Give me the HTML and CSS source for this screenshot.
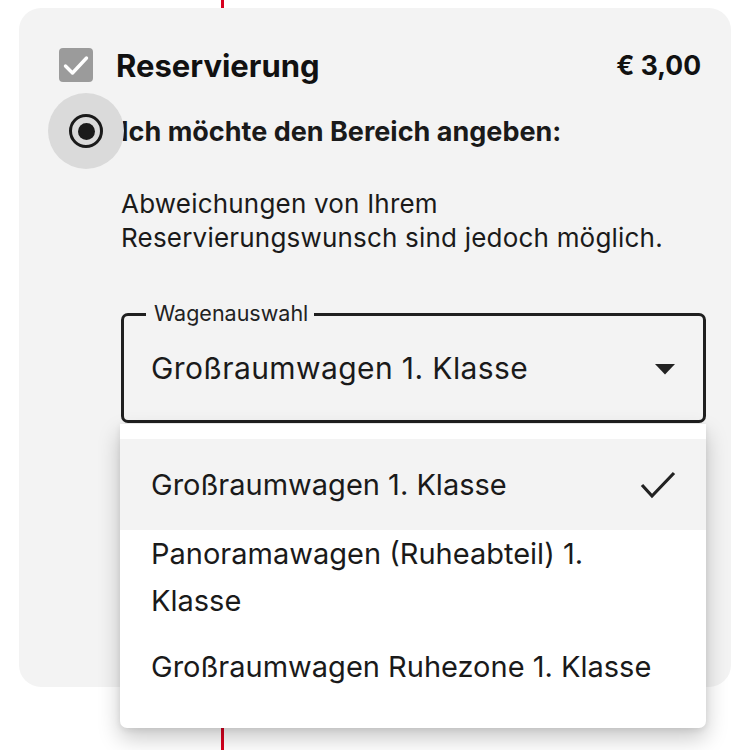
FILE: index.html
```html
<!DOCTYPE html>
<html lang="de">
<head>
<meta charset="utf-8">
<link rel="stylesheet" href="styles.css">
</head>
<body>
<div class="page">
  <div class="card">
    <div class="row-head">
      <span class="checkbox">
        <svg width="34" height="34" viewBox="0 0 34 34"><polyline points="6.5,18 13.5,25 27.5,10" fill="none" stroke="#fff" stroke-width="3.4" stroke-linecap="round" stroke-linejoin="round"/></svg>
      </span>
      <span class="title">Reservierung</span>
      <span class="price">€ 3,00</span>
    </div>
    <div class="row-radio">
      <span class="radio"><span class="halo"></span><span class="ring"><span class="dot"></span></span></span>
      <span class="radio-label">Ich möchte den Bereich angeben:</span>
    </div>
    <p class="desc">Abweichungen von Ihrem<br>Reservierungswunsch sind jedoch möglich.</p>
    <div class="select">
      <span class="select-label">Wagenauswahl</span>
      <span class="select-value">Großraumwagen 1. Klasse</span>
      <svg class="caret" width="20" height="11" viewBox="0 0 20 11"><polygon points="0,0 20,0 10,10.5" fill="#222"/></svg>
      <ul class="menu">
        <li class="item selected"><span>Großraumwagen 1. Klasse</span>
          <svg width="36" height="28" viewBox="0 0 36 28"><polyline points="2,14 12,25 34,2" fill="none" stroke="#222" stroke-width="3.2"/></svg>
        </li>
        <li class="item multi"><span>Panoramawagen (Ruheabteil) 1. Klasse</span></li>
        <li class="item clip"><span>Großraumwagen Ruhezone 1. Klasse</span></li>
      </ul>
    </div>
  </div>
</div>
</body>
</html>
```
FILE: styles.css
```css
* { box-sizing: border-box; }
html, body { margin: 0; padding: 0; background: #fff; }
body { font-family: Inter, "Liberation Sans", sans-serif; color: #111; }
.page { position: relative; width: 750px; height: 750px; padding-top: 8px; overflow: hidden; }
.page::before { content: ""; position: absolute; left: 221px; top: 0; width: 3px; height: 750px; background: #d7001e; }
.card { position: relative; margin: 0 19px; height: 679px; background: #f3f3f3; border-radius: 22px; padding: 40px 30px 0 40px; }
.row-head { display: flex; align-items: center; height: 34px; }
.checkbox { width: 34px; height: 34px; background: #9b9b9b; border-radius: 4px; display: flex; }
.title { font-size: 31px; font-weight: 700; margin-left: 23px; }
.price { margin-left: auto; font-size: 26.5px; font-weight: 700; }
.row-radio { display: flex; align-items: center; margin-top: 32px; height: 34px; margin-left: 10px; }
.radio { position: relative; width: 34px; height: 34px; flex: none; }
.halo { position: absolute; left: -21px; top: -21px; width: 76px; height: 76px; border-radius: 50%; background: #dadada; }
.ring { position: absolute; inset: 0; border: 3.5px solid #1a1a1a; border-radius: 50%; display: flex; align-items: center; justify-content: center; }
.dot { width: 17px; height: 17px; border-radius: 50%; background: #1a1a1a; }
.radio-label { font-size: 27px; font-weight: 700; margin-left: 18px; color: #1a1a1a; }
.desc { margin: 39px 0 0 62px; font-size: 26px; line-height: 34px; letter-spacing: 0.2px; color: #1a1a1a; }
.select { position: relative; margin: 58px 0 0 62px; width: 585px; height: 110px; border: 3px solid #1f1f1f; border-radius: 7px; display: flex; align-items: center; padding: 0 28px 0 27px; }
.select-label { position: absolute; left: 22px; top: -14px; background: #f3f3f3; padding: 0 6px 0 8px; font-size: 21.5px; line-height: 22px; color: #222; }
.select-value { font-size: 30px; letter-spacing: 0.4px; color: #1a1a1a; }
.caret { margin-left: auto; margin-top: 2px; }
.menu { position: absolute; left: -4px; top: 108px; width: 586px; margin: 0; padding: 15px 0 0; list-style: none; background: #fff; border-radius: 0 0 7px 7px; height: 304px; box-shadow: 0 10px 22px rgba(0,0,0,0.22), 0 2px 6px rgba(0,0,0,0.08); }
.item { display: flex; align-items: center; padding: 0 30px 0 31px; font-size: 29px; color: #1a1a1a; }
.item.selected { background: #f3f3f3; height: 91px; justify-content: space-between; }
.item.multi { line-height: 47px; width: 500px; }
.item.clip { margin-top: 19px; line-height: 47px; }
.item.clip span { width: 501px; overflow: hidden; white-space: nowrap; display: block; }
```
